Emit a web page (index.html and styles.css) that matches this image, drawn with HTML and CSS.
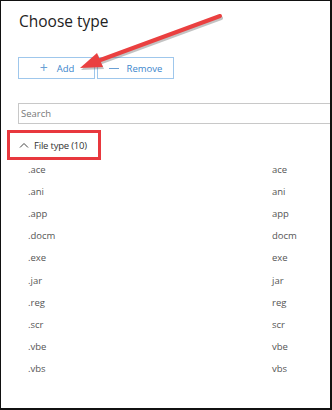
FILE: index.html
```html
<!doctype html>
<html>
  <head>
    <meta charset="utf-8">
    <title>Choose type</title>
    <link rel="stylesheet" href="styles.css">
  </head>
  <body>
    <div class="frame">
      <h1 class="title">Choose type</h1>
      <div class="toolbar">
        <button class="btn"><span class="glyph">+</span>Add</button>
        <button class="btn"><span class="glyph minus"></span>Remove</button>
      </div>
      <input class="search" type="text" placeholder="Search">
      <div class="group">
        <div class="group-head">
          <svg class="chevron" width="10" height="6" viewBox="0 0 10 6"><path d="M1 5.5 L5 1.5 L9 5.5" fill="none" stroke="#444" stroke-width="1"/></svg>
          <span>File type (10)</span>
        </div>
      </div>
      <div class="list">
        <div class="row"><span>.ace</span><span>ace</span></div>
        <div class="row"><span>.ani</span><span>ani</span></div>
        <div class="row"><span>.app</span><span>app</span></div>
        <div class="row"><span>.docm</span><span>docm</span></div>
        <div class="row"><span>.exe</span><span>exe</span></div>
        <div class="row"><span>.jar</span><span>jar</span></div>
        <div class="row"><span>.reg</span><span>reg</span></div>
        <div class="row"><span>.scr</span><span>scr</span></div>
        <div class="row"><span>.vbe</span><span>vbe</span></div>
        <div class="row"><span>.vbs</span><span>vbs</span></div>
      </div>
      <!-- callout arrow drawn over the screenshot -->
      <svg class="arrow" width="332" height="410" viewBox="0 0 332 410">
        <g transform="translate(1,2)" opacity="0.35">
          <line x1="220" y1="16" x2="95" y2="62" stroke="#555" stroke-width="4" stroke-linecap="round"/>
          <polygon points="80,68 97,53 103,67" fill="#555"/>
        </g>
        <line x1="220" y1="16" x2="95" y2="62" stroke="#ea4040" stroke-width="4" stroke-linecap="round"/>
        <polygon points="80,68 97,53 103,67" fill="#ea4040"/>
      </svg>
    </div>
  </body>
</html>
```

FILE: styles.css
```css
html, body {
  margin: 0;
  padding: 0;
  background: #fff;
}

.frame {
  position: relative;
  width: 332px;
  height: 410px;
  box-sizing: border-box;
  border-left: 1px solid #111;
  border-top: 1px solid #111;
  border-right: 2px solid #111;
  border-bottom: 2px solid #111;
  overflow: hidden;
  font-family: "Open Sans", "Noto Sans", sans-serif;
}

.title {
  margin: 0;
  padding: 8px 0 0 18px;
  font-size: 15.5px;
  font-weight: 500;
  color: #222;
  line-height: 24px;
}

.toolbar {
  display: flex;
  gap: 2px;
  margin: 24px 0 0 17px;
}

.btn {
  display: flex;
  align-items: center;
  justify-content: center;
  width: 77px;
  height: 22px;
  padding: 0;
  border: 1px solid #9fc7ec;
  background: #fff;
  color: #3c86cc;
  font-family: "Open Sans", sans-serif;
  font-size: 9.5px;
}

.glyph {
  display: inline-block;
  width: 10px;
  margin-right: 8px;
  font-size: 14px;
  font-weight: 400;
  color: #6a9fd4;
  line-height: 10px;
}

.glyph.minus {
  height: 1px;
  background: #6a9fd4;
}

.search {
  display: block;
  margin: 24px 0 0 17px;
  width: 330px;
  height: 21px;
  box-sizing: border-box;
  border: 1px solid #c8c8c8;
  padding: 0 2px;
  font-family: "Open Sans", sans-serif;
  font-size: 9.5px;
  color: #444;
  outline: none;
}

.search::placeholder {
  color: #777;
}

.group {
  margin: 6px 0 0 6px;
  width: 94px;
  height: 30px;
  box-sizing: border-box;
  border: 3px solid #e8383e;
  display: flex;
  align-items: center;
}

.group-head {
  display: flex;
  align-items: center;
  padding-left: 9px;
  font-size: 9.5px;
  letter-spacing: -0.2px;
  color: #333;
}

.chevron {
  margin-right: 5px;
}

.list {
  padding: 0 0 0 27px;
  margin-top: -2px;
}

.row {
  display: flex;
  height: 22.2px;
  align-items: center;
  font-size: 9.5px;
  color: #555;
}

.row span:first-child {
  width: 244px;
}

.arrow {
  position: absolute;
  left: -1px;
  top: -1px;
  pointer-events: none;
}
```
